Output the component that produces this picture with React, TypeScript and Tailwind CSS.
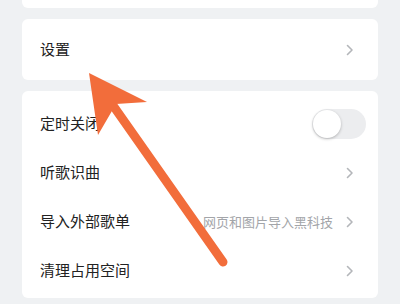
import React from 'react';

const font = { fontFamily: '"Noto Sans CJK SC", "Noto Sans", sans-serif' };

const Chevron = () => (
  <svg width="8" height="12" viewBox="0 0 8 12" className="shrink-0">
    <polyline points="1.5,1.5 6,6 1.5,10.5" fill="none" stroke="#b4b6ba" strokeWidth="1.6" strokeLinecap="round" strokeLinejoin="round" />
  </svg>
);

interface RowProps {
  label: string;
  hint?: string;
  toggle?: boolean;
  height?: string;
}

const Row: React.FC<RowProps> = ({ label, hint, toggle, height = 'h-[49px]' }) => (
  <div className={`flex items-center justify-between pl-[18px] pr-[24px] ${height}`}>
    <span className="text-[15px] text-[#222222]">{label}</span>
    {toggle ? (
      <div className="mr-[-12px] flex h-[30px] w-[54px] items-center rounded-full bg-[#ecedef] px-[1px]">
        <div className="h-[28px] w-[28px] rounded-full bg-white shadow-[0_1px_3px_rgba(0,0,0,0.25)]" />
      </div>
    ) : (
      <div className="flex items-center gap-[13px]">
        {hint && <span className="text-[13px] text-[#a3a5a9]">{hint}</span>}
        <Chevron />
      </div>
    )}
  </div>
);

export default function App() {
  return (
    <div className="relative h-[304px] w-[400px] overflow-hidden bg-[#eff1f3]" style={font}>
      <div className="flex flex-col gap-[11px] px-[22px]">
        <div className="h-[8px] rounded-b-[6px] bg-white" />
        <div className="rounded-[6px] bg-white">
          <Row label="设置" height="h-[61px]" />
        </div>
        <div className="rounded-[6px] bg-white pt-[8px] pb-[3px]">
          <Row label="定时关闭" toggle />
          <Row label="听歌识曲" />
          <Row label="导入外部歌单" hint="网页和图片导入黑科技" />
          <Row label="清理占用空间" />
        </div>
      </div>

      {/* annotation arrow */}
      <svg className="pointer-events-none absolute inset-0" width="400" height="304" viewBox="0 0 400 304">
        <line x1="112" y1="104" x2="223" y2="262" stroke="#f26d3b" strokeWidth="9" strokeLinecap="round" />
        <polygon points="89,73 147,102 116,104 98,135" fill="#f26d3b" />
      </svg>
    </div>
  );
}
